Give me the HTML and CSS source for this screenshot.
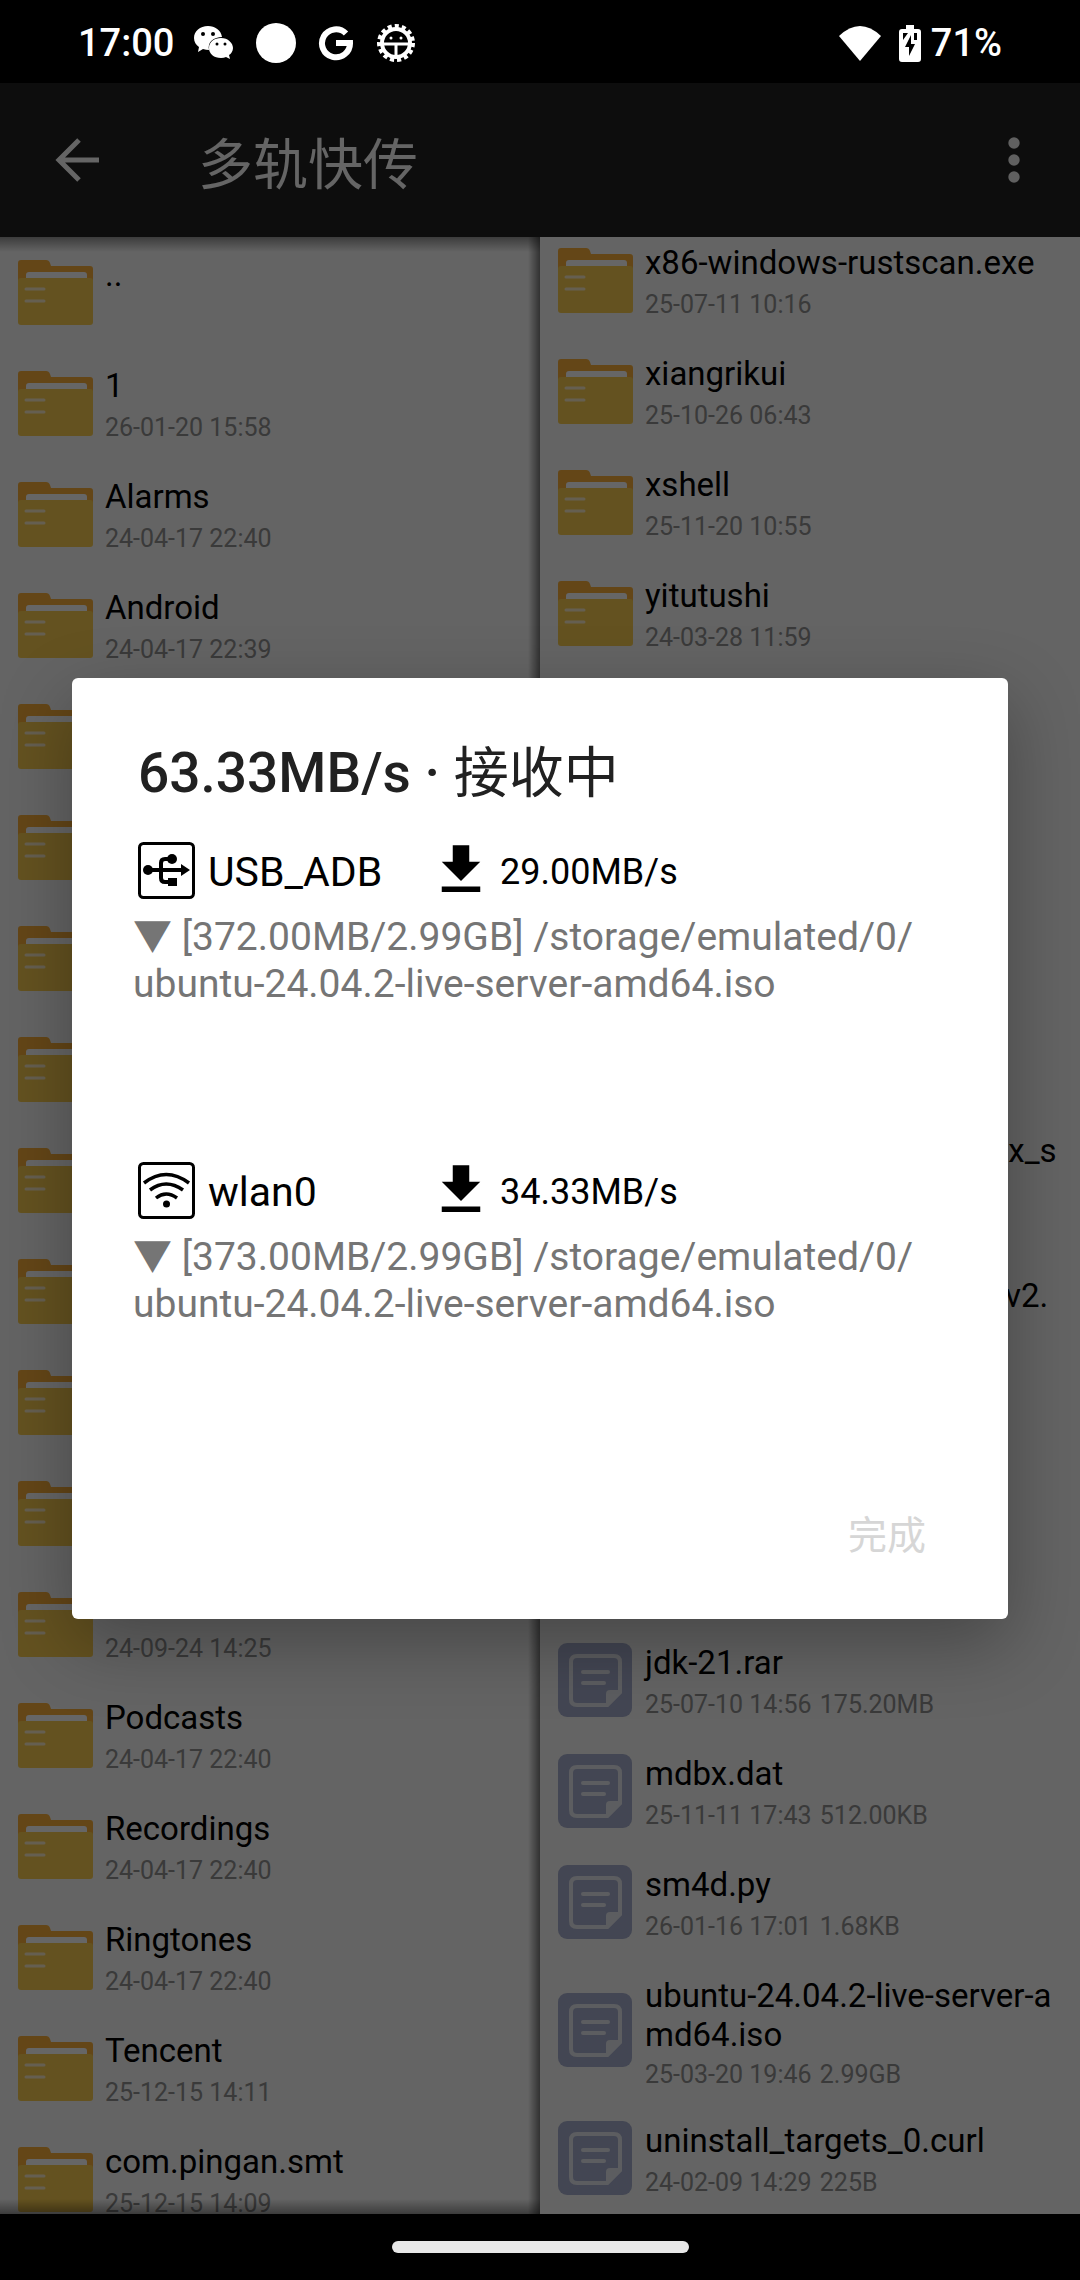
FILE: index.html
```html
<!DOCTYPE html>
<html lang="zh-CN">
<head>
<meta charset="utf-8">
<meta name="viewport" content="width=device-width, initial-scale=1">
<title>多轨快传</title>
<link rel="stylesheet" href="styles.css">
</head>
<body>
<svg class="sprite" aria-hidden="true">
  <symbol id="i-folder" viewBox="0 0 75 75">
    <path fill="#fab03a" d="M3 5h25q3 0 4 3l1 3h39q3 0 3 3v20H0V8q0-3 3-3z"/>
    <path fill="#fff" d="M11 17h55q3 0 3 3v6H8v-6q0-3 3-3z"/>
    <path fill="#fbce50" d="M0 26q0-3 3-3h69q3 0 3 3v41q0 3-3 3H3q-3 0-3-3z"/>
    <path stroke="#fdeecb" stroke-width="3" stroke-linecap="round" d="M8 34h18M8 46h18"/>
  </symbol>
  <symbol id="i-file" viewBox="0 0 75 75">
    <rect width="74" height="74" rx="9" fill="#a8b0cf"/>
    <path fill="none" stroke="#e6e8f0" stroke-width="4" stroke-linejoin="round" d="M19 13h37q6 0 6 6v30L49 62H19q-6 0-6-6V19q0-6 6-6z"/>
    <path fill="#e6e8f0" d="M64 47v3L50 64h-2V51q0-4 4-4z"/>
    <path stroke="#e6e8f0" stroke-width="4" stroke-linecap="round" d="M25 29h25M25 40h21"/>
  </symbol>
  <symbol id="i-download" viewBox="0 0 24 24">
    <path d="M19 9h-4V3H9v6H5l7 7zM5 18v2h14v-2z"/>
  </symbol>
  <symbol id="i-usb" viewBox="0 0 57 57">
    <rect x="1.500" y="1.500" width="54" height="54" rx="4" fill="none" stroke="#000" stroke-width="3"/>
    <circle cx="10" cy="28" r="5"/><circle cx="34" cy="17" r="5"/>
    <path d="M30 36h9v8h-9zM43 22l9 6-9 6z"/>
    <path fill="none" stroke="#000" stroke-width="4" d="M10 28h35M32 17h-5q-4 0-4 4v15q0 4 4 4h5"/>
  </symbol>
  <symbol id="i-wlan" viewBox="0 0 57 57">
    <rect x="1.500" y="1.500" width="54" height="54" rx="4" fill="none" stroke="#000" stroke-width="3"/>
    <circle cx="28.500" cy="42" r="3.500"/>
    <path fill="none" stroke="#000" stroke-width="3.500" d="M6 21q22-17 45 0M12 28q16-12 33 0M18 36q10-8 21 0"/>
  </symbol>
</svg>

<header class="status">
  <time class="clock">17:00</time>
  <div class="notices">
    <svg width="40" height="34" viewBox="0 0 40 34" aria-hidden="true">
      <path fill="#fff" d="M14 0C6 0 0 5 0 12c0 4 2 7 5 9l-1 5 5-3q3 1 6 1c-2-8 5-13 13-13C27 4 21 0 14 0z"/>
      <path fill="#fff" d="M27 12c7 0 12 5 12 10 0 3-2 6-4 7l1 4-4-2q-2 1-5 1c-7 0-12-4-12-10s5-10 12-10z"/>
      <g fill="#000"><circle cx="9" cy="8" r="2"/><circle cx="19" cy="8" r="2"/><circle cx="23" cy="18" r="1.500"/><circle cx="31" cy="18" r="1.500"/></g>
    </svg>
    <svg width="40" height="42" viewBox="0 0 40 42" aria-hidden="true"><circle cx="20" cy="21" r="20" fill="#fff"/></svg>
    <svg width="36" height="36" viewBox="0 0 36 36" aria-hidden="true"><path fill="none" stroke="#fff" stroke-width="6" d="M28 8.500A14 14 0 1 0 32 18H18"/></svg>
    <svg width="40" height="40" viewBox="0 0 40 40" aria-hidden="true">
      <circle cx="20" cy="20" r="17" fill="none" stroke="#fff" stroke-width="4" stroke-dasharray="4.100 3.020"/>
      <circle cx="20" cy="20" r="14" fill="none" stroke="#fff" stroke-width="4"/>
      <path fill="none" stroke="#fff" stroke-width="3" d="M6 21h28M20 21v13"/>
      <circle cx="15" cy="15" r="1.500" fill="#fff"/><circle cx="25" cy="15" r="1.500" fill="#fff"/>
    </svg>
  </div>
  <div class="system">
    <svg width="42" height="36" viewBox="0 0 42 36" aria-hidden="true"><path fill="#fff" d="M0 11Q21-9 42 11L21 36z"/></svg>
    <svg width="22" height="37" viewBox="0 0 22 37" aria-hidden="true">
      <path fill="#fff" d="M7 0h8v4h4q3 0 3 3v27q0 3-3 3H3q-3 0-3-3V7q0-3 3-3h4z"/>
      <path fill="#000" d="M4 8h5L4 15zM15 8h3v7h-3zM12 10L6 22h4v9l6-12h-4z"/>
    </svg>
    <span class="level">71%</span>
  </div>
</header>

<main class="stage">
  <div class="appbar">
    <button class="icon-btn back" type="button" aria-label="返回">
      <svg width="44" height="44" viewBox="0 0 44 44"><path fill="none" stroke="currentColor" stroke-width="5" d="M44 22H5M24 2L4 22l20 20"/></svg>
    </button>
    <h1 class="app-title">多轨快传</h1>
    <button class="icon-btn more" type="button" aria-label="更多">
      <svg width="12" height="46" viewBox="0 0 12 46"><g fill="currentColor"><circle cx="6" cy="6" r="5.700"/><circle cx="6" cy="23" r="5.700"/><circle cx="6" cy="40" r="5.700"/></g></svg>
    </button>
  </div>

  <div class="panes">
    <section class="pane pane-local">
      <ul class="files">
        <li class="file"><svg class="file-icon"><use href="#i-folder"/></svg><div class="file-text"><div class="name">..</div><div class="meta"></div></div></li>
        <li class="file"><svg class="file-icon"><use href="#i-folder"/></svg><div class="file-text"><div class="name">1</div><div class="meta">26-01-20 15:58</div></div></li>
        <li class="file"><svg class="file-icon"><use href="#i-folder"/></svg><div class="file-text"><div class="name">Alarms</div><div class="meta">24-04-17 22:40</div></div></li>
        <li class="file"><svg class="file-icon"><use href="#i-folder"/></svg><div class="file-text"><div class="name">Android</div><div class="meta">24-04-17 22:39</div></div></li>
        <li class="file"><svg class="file-icon"><use href="#i-folder"/></svg><div class="file-text"><div class="name"></div><div class="meta"></div></div></li>
        <li class="file"><svg class="file-icon"><use href="#i-folder"/></svg><div class="file-text"><div class="name"></div><div class="meta"></div></div></li>
        <li class="file"><svg class="file-icon"><use href="#i-folder"/></svg><div class="file-text"><div class="name"></div><div class="meta"></div></div></li>
        <li class="file"><svg class="file-icon"><use href="#i-folder"/></svg><div class="file-text"><div class="name"></div><div class="meta"></div></div></li>
        <li class="file"><svg class="file-icon"><use href="#i-folder"/></svg><div class="file-text"><div class="name"></div><div class="meta"></div></div></li>
        <li class="file"><svg class="file-icon"><use href="#i-folder"/></svg><div class="file-text"><div class="name"></div><div class="meta"></div></div></li>
        <li class="file"><svg class="file-icon"><use href="#i-folder"/></svg><div class="file-text"><div class="name"></div><div class="meta"></div></div></li>
        <li class="file"><svg class="file-icon"><use href="#i-folder"/></svg><div class="file-text"><div class="name"></div><div class="meta"></div></div></li>
        <li class="file"><svg class="file-icon"><use href="#i-folder"/></svg><div class="file-text"><div class="name"></div><div class="meta">24-09-24 14:25</div></div></li>
        <li class="file"><svg class="file-icon"><use href="#i-folder"/></svg><div class="file-text"><div class="name">Podcasts</div><div class="meta">24-04-17 22:40</div></div></li>
        <li class="file"><svg class="file-icon"><use href="#i-folder"/></svg><div class="file-text"><div class="name">Recordings</div><div class="meta">24-04-17 22:40</div></div></li>
        <li class="file"><svg class="file-icon"><use href="#i-folder"/></svg><div class="file-text"><div class="name">Ringtones</div><div class="meta">24-04-17 22:40</div></div></li>
        <li class="file"><svg class="file-icon"><use href="#i-folder"/></svg><div class="file-text"><div class="name">Tencent</div><div class="meta">25-12-15 14:11</div></div></li>
        <li class="file"><svg class="file-icon"><use href="#i-folder"/></svg><div class="file-text"><div class="name">com.pingan.smt</div><div class="meta">25-12-15 14:09</div></div></li>
      </ul>
    </section>

    <section class="pane pane-remote">
      <ul class="files">
        <li class="file"><svg class="file-icon"><use href="#i-folder"/></svg><div class="file-text"><div class="name">x86-windows-rustscan.exe</div><div class="meta">25-07-11 10:16</div></div></li>
        <li class="file"><svg class="file-icon"><use href="#i-folder"/></svg><div class="file-text"><div class="name">xiangrikui</div><div class="meta">25-10-26 06:43</div></div></li>
        <li class="file"><svg class="file-icon"><use href="#i-folder"/></svg><div class="file-text"><div class="name">xshell</div><div class="meta">25-11-20 10:55</div></div></li>
        <li class="file"><svg class="file-icon"><use href="#i-folder"/></svg><div class="file-text"><div class="name">yitutushi</div><div class="meta">24-03-28 11:59</div></div></li>
        <li class="file"><svg class="file-icon"><use href="#i-folder"/></svg><div class="file-text"><div class="name"></div><div class="meta"></div></div></li>
        <li class="file"><svg class="file-icon"><use href="#i-file"/></svg><div class="file-text"><div class="name"></div><div class="meta"></div></div></li>
        <li class="file"><svg class="file-icon"><use href="#i-file"/></svg><div class="file-text"><div class="name"></div><div class="meta"></div></div></li>
        <li class="file"><svg class="file-icon"><use href="#i-file"/></svg><div class="file-text"><div class="name"></div><div class="meta"></div></div></li>
        <li class="file"><svg class="file-icon"><use href="#i-file"/></svg><div class="file-text"><div class="name">debian-12-amd64-lts-linux_small.iso</div><div class="meta"></div></div></li>
        <li class="file"><svg class="file-icon"><use href="#i-file"/></svg><div class="file-text"><div class="name">debian-12-amd64-trusts-v2.md</div><div class="meta"></div></div></li>
        <li class="file"><svg class="file-icon"><use href="#i-file"/></svg><div class="file-text"><div class="name"></div><div class="meta"></div></div></li>
        <li class="file"><svg class="file-icon"><use href="#i-file"/></svg><div class="file-text"><div class="name"></div><div class="meta"></div></div></li>
        <li class="file"><svg class="file-icon"><use href="#i-file"/></svg><div class="file-text"><div class="name">jdk-21.rar</div><div class="meta">25-07-10 14:56 <span class="size">175.20MB</span></div></div></li>
        <li class="file"><svg class="file-icon"><use href="#i-file"/></svg><div class="file-text"><div class="name">mdbx.dat</div><div class="meta">25-11-11 17:43 <span class="size">512.00KB</span></div></div></li>
        <li class="file"><svg class="file-icon"><use href="#i-file"/></svg><div class="file-text"><div class="name">sm4d.py</div><div class="meta">26-01-16 17:01 <span class="size">1.68KB</span></div></div></li>
        <li class="file"><svg class="file-icon"><use href="#i-file"/></svg><div class="file-text"><div class="name">ubuntu-24.04.2-live-server-amd64.iso</div><div class="meta">25-03-20 19:46 <span class="size">2.99GB</span></div></div></li>
        <li class="file"><svg class="file-icon"><use href="#i-file"/></svg><div class="file-text"><div class="name">uninstall_targets_0.curl</div><div class="meta">24-02-09 14:29 <span class="size">225B</span></div></div></li>
      </ul>
    </section>
  </div>

  <div class="scrim">
    <div class="dialog" role="dialog" aria-modal="true" aria-labelledby="dialog-title">
      <h2 class="dialog-title" id="dialog-title">63.33MB/s · <span class="state">接收中</span></h2>
      <section class="link">
        <div class="link-head">
          <svg class="link-icon"><use href="#i-usb"/></svg>
          <span class="link-name">USB_ADB</span>
          <svg class="link-arrow"><use href="#i-download"/></svg>
          <span class="link-speed">29.00MB/s</span>
        </div>
        <p class="link-path">▼ [372.00MB/2.99GB] /storage/emulated/0/<wbr>ubuntu-24.04.2-live-server-amd64.iso</p>
      </section>
      <section class="link">
        <div class="link-head">
          <svg class="link-icon"><use href="#i-wlan"/></svg>
          <span class="link-name">wlan0</span>
          <svg class="link-arrow"><use href="#i-download"/></svg>
          <span class="link-speed">34.33MB/s</span>
        </div>
        <p class="link-path">▼ [373.00MB/2.99GB] /storage/emulated/0/<wbr>ubuntu-24.04.2-live-server-amd64.iso</p>
      </section>
      <div class="dialog-actions"><button class="done" type="button" disabled>完成</button></div>
    </div>
  </div>
</main>

<footer class="navbar"><div class="handle"></div></footer>
</body>
</html>
```
FILE: styles.css
```css
* { box-sizing: border-box; }

body {
  margin: 0;
  height: 100vh;
  display: flex;
  flex-direction: column;
  overflow: hidden;
  background: #000;
  font-family: Roboto, "Noto Sans CJK SC", sans-serif;
}

h1, h2, p, ul { margin: 0; padding: 0; }
ul { list-style: none; }
svg { display: block; flex: none; }
button { border: 0; background: none; padding: 0; font: inherit; color: inherit; }

.sprite { position: absolute; width: 0; height: 0; }

/* status bar */
.status {
  flex: none;
  height: 83px;
  padding: 3px 78px 0;
  display: flex;
  align-items: center;
  color: #fff;
  font-size: 38px;
  font-weight: 500;
  line-height: 46px;
}
.notices { display: flex; align-items: center; gap: 22px; margin-left: 20px; }
.system { display: flex; align-items: center; gap: 18px; margin-left: auto; }
.level { margin-left: -8px; }

/* app */
.stage {
  position: relative;
  flex: 1;
  min-height: 0;
  display: flex;
  flex-direction: column;
}
.appbar {
  flex: none;
  height: 154px;
  padding: 0 60px 0 55px;
  display: flex;
  align-items: center;
  background: #212121;
  color: #fcfcfc;
}
.app-title {
  flex: 1;
  margin-left: 99px;
  padding-top: 10px;
  font-size: 55px;
  font-weight: 400;
  line-height: 64px;
}
.more { color: #f0f0f0; }

.panes {
  flex: 1;
  min-height: 0;
  display: grid;
  grid-template-columns: 1fr 1fr;
  background: #fafafa;
}
.pane {
  position: relative;
  min-width: 0;
  overflow: hidden;
  display: flex;
  flex-direction: column;
}
.pane-remote { justify-content: flex-end; }
.pane-local::after {
  content: "";
  position: absolute;
  inset: 0;
  background:
    linear-gradient(to bottom, rgba(0, 0, 0, .4), transparent 15px),
    linear-gradient(to top, rgba(0, 0, 0, .4), transparent 15px),
    linear-gradient(to left, rgba(0, 0, 0, .5), transparent 12px);
}

.file {
  display: flex;
  align-items: center;
  gap: 12px;
  min-height: 111px;
  padding: 0 18px;
}
.file-icon { width: 75px; height: 75px; }
.file-text { flex: 1; align-self: flex-start; min-width: 0; padding: 18px 0 14px; }
.name {
  min-height: 41px;
  font-size: 33px;
  line-height: 39px;
  color: #000;
  word-break: break-all;
}
.meta {
  height: 29px;
  margin-top: 6px;
  font-size: 25px;
  line-height: 29px;
  color: #919191;
}
.size { margin-left: 2px; }

/* dialog */
.scrim {
  position: absolute;
  inset: 0;
  display: flex;
  align-items: center;
  padding: 0 72px;
  background: rgba(0, 0, 0, .6);
}
.dialog {
  flex: 1;
  padding: 63px 61px 24px;
  border-radius: 6px;
  background: #fff;
  box-shadow: 0 24px 72px rgba(0, 0, 0, .3);
  color: #000;
}
.dialog-title {
  margin-bottom: 32px;
  padding-left: 5px;
  font-size: 55px;
  font-weight: 500;
  line-height: 64px;
  color: #212121;
}
.state { font-weight: 400; }
.link { min-height: 320px; }
.link-head { display: flex; align-items: center; height: 66px; padding-left: 5px; }
.link-icon { width: 57px; height: 57px; }
.link-name { width: 233px; padding: 3px 0 0 13px; font-size: 41px; line-height: 48px; }
.link-arrow { width: 66px; height: 66px; }
.link-speed { padding: 3px 0 0 6px; font-size: 36px; line-height: 42px; }
.link-path {
  margin-top: 11px;
  font-size: 39px;
  line-height: 47px;
  color: #757575;
}
.dialog-actions { display: flex; justify-content: flex-end; }
.done {
  height: 118px;
  padding: 0 21px;
  font-size: 39px;
  line-height: 46px;
  color: #d6d6d6;
}

/* gesture bar */
.navbar { flex: none; height: 66px; display: grid; place-items: center; }
.handle { width: 297px; height: 12px; border-radius: 6px; background: #e8e8e8; }
```
